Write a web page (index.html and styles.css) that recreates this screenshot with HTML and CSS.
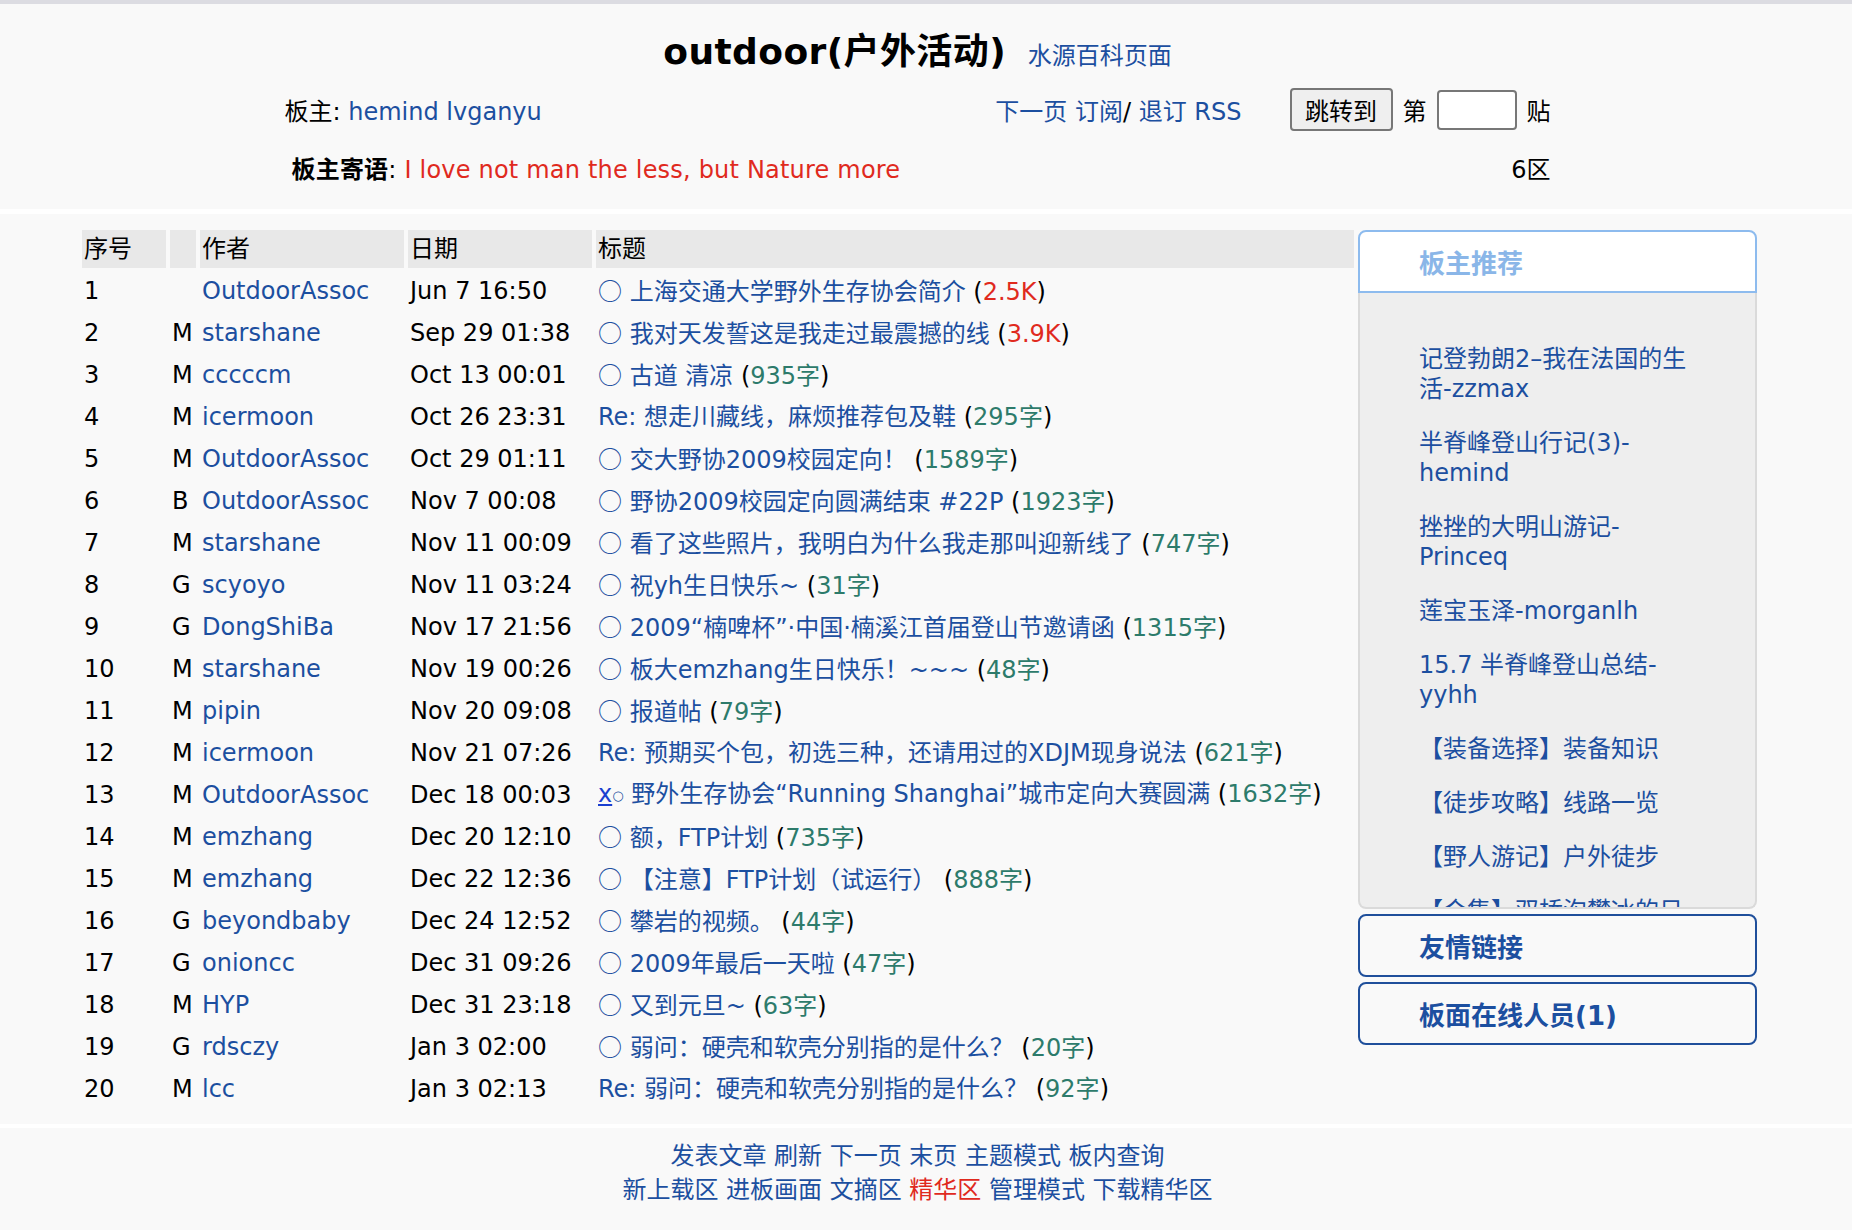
FILE: index.html
```html
<!DOCTYPE html>
<html lang="zh-CN">
<head>
<meta charset="utf-8">
<title>outdoor(户外活动)</title>
<link rel="stylesheet" href="styles.css">
</head>
<body>
<div class="topline"></div>
<header class="header">
  <div class="header-inner">
    <div class="title-row">
      <h1 class="title">outdoor(户外活动)</h1>
      <a class="wiki" href="#">水源百科页面</a>
    </div>
    <div class="info-row">
      <div class="owners">板主: <a href="#">hemind</a> <a href="#">lvganyu</a></div>
      <div class="nav"><a href="#">下一页</a> <a href="#">订阅</a>/ <a href="#">退订</a> <a href="#">RSS</a></div>
      <form class="jump">
        <button type="button" class="jump-btn">跳转到</button>
        <span>第</span>
        <input class="jump-input" type="text">
        <span>贴</span>
      </form>
    </div>
    <div class="motto-row">
      <div class="motto"><b>板主寄语</b>: <span class="red">I love not man the less, but Nature more</span></div>
      <div class="zone">6区</div>
    </div>
  </div>
</header>

<main class="main">
  <table class="posts">
    <thead>
      <tr>
        <th class="c-num">序号</th>
        <th class="c-flag"></th>
        <th class="c-author">作者</th>
        <th class="c-date">日期</th>
        <th class="c-title">标题</th>
      </tr>
    </thead>
    <tbody>
      <tr><td>1</td><td></td><td><a href="#">OutdoorAssoc</a></td><td>Jun 7 16:50</td><td><a href="#"><span class="dot">○</span> 上海交通大学野外生存协会简介</a> (<span class="red">2.5K</span>)</td></tr>
      <tr><td>2</td><td>M</td><td><a href="#">starshane</a></td><td>Sep 29 01:38</td><td><a href="#"><span class="dot">○</span> 我对天发誓这是我走过最震撼的线</a> (<span class="red">3.9K</span>)</td></tr>
      <tr><td>3</td><td>M</td><td><a href="#">cccccm</a></td><td>Oct 13 00:01</td><td><a href="#"><span class="dot">○</span> 古道 清凉</a> (<span class="green">935字</span>)</td></tr>
      <tr><td>4</td><td>M</td><td><a href="#">icermoon</a></td><td>Oct 26 23:31</td><td><a href="#">Re: 想走川藏线，麻烦推荐包及鞋</a> (<span class="green">295字</span>)</td></tr>
      <tr><td>5</td><td>M</td><td><a href="#">OutdoorAssoc</a></td><td>Oct 29 01:11</td><td><a href="#"><span class="dot">○</span> 交大野协2009校园定向！</a> (<span class="green">1589字</span>)</td></tr>
      <tr><td>6</td><td>B</td><td><a href="#">OutdoorAssoc</a></td><td>Nov 7 00:08</td><td><a href="#"><span class="dot">○</span> 野协2009校园定向圆满结束 #22P</a> (<span class="green">1923字</span>)</td></tr>
      <tr><td>7</td><td>M</td><td><a href="#">starshane</a></td><td>Nov 11 00:09</td><td><a href="#"><span class="dot">○</span> 看了这些照片，我明白为什么我走那叫迎新线了</a> (<span class="green">747字</span>)</td></tr>
      <tr><td>8</td><td>G</td><td><a href="#">scyoyo</a></td><td>Nov 11 03:24</td><td><a href="#"><span class="dot">○</span> 祝yh生日快乐~</a> (<span class="green">31字</span>)</td></tr>
      <tr><td>9</td><td>G</td><td><a href="#">DongShiBa</a></td><td>Nov 17 21:56</td><td><a href="#"><span class="dot">○</span> 2009“楠啤杯”·中国·楠溪江首届登山节邀请函</a> (<span class="green">1315字</span>)</td></tr>
      <tr><td>10</td><td>M</td><td><a href="#">starshane</a></td><td>Nov 19 00:26</td><td><a href="#"><span class="dot">○</span> 板大emzhang生日快乐！~~~</a> (<span class="green">48字</span>)</td></tr>
      <tr><td>11</td><td>M</td><td><a href="#">pipin</a></td><td>Nov 20 09:08</td><td><a href="#"><span class="dot">○</span> 报道帖</a> (<span class="green">79字</span>)</td></tr>
      <tr><td>12</td><td>M</td><td><a href="#">icermoon</a></td><td>Nov 21 07:26</td><td><a href="#">Re: 预期买个包，初选三种，还请用过的XDJM现身说法</a> (<span class="green">621字</span>)</td></tr>
      <tr><td>13</td><td>M</td><td><a href="#">OutdoorAssoc</a></td><td>Dec 18 00:03</td><td><a href="#" class="mark">x</a><a href="#"><span class="small-dot">○</span> 野外生存协会“Running Shanghai”城市定向大赛圆满</a> (<span class="green">1632字</span>)</td></tr>
      <tr><td>14</td><td>M</td><td><a href="#">emzhang</a></td><td>Dec 20 12:10</td><td><a href="#"><span class="dot">○</span> 额，FTP计划</a> (<span class="green">735字</span>)</td></tr>
      <tr><td>15</td><td>M</td><td><a href="#">emzhang</a></td><td>Dec 22 12:36</td><td><a href="#"><span class="dot">○</span> 【注意】FTP计划（试运行）</a> (<span class="green">888字</span>)</td></tr>
      <tr><td>16</td><td>G</td><td><a href="#">beyondbaby</a></td><td>Dec 24 12:52</td><td><a href="#"><span class="dot">○</span> 攀岩的视频。</a> (<span class="green">44字</span>)</td></tr>
      <tr><td>17</td><td>G</td><td><a href="#">onioncc</a></td><td>Dec 31 09:26</td><td><a href="#"><span class="dot">○</span> 2009年最后一天啦</a> (<span class="green">47字</span>)</td></tr>
      <tr><td>18</td><td>M</td><td><a href="#">HYP</a></td><td>Dec 31 23:18</td><td><a href="#"><span class="dot">○</span> 又到元旦~</a> (<span class="green">63字</span>)</td></tr>
      <tr><td>19</td><td>G</td><td><a href="#">rdsczy</a></td><td>Jan 3 02:00</td><td><a href="#"><span class="dot">○</span> 弱问：硬壳和软壳分别指的是什么？</a> (<span class="green">20字</span>)</td></tr>
      <tr><td>20</td><td>M</td><td><a href="#">lcc</a></td><td>Jan 3 02:13</td><td><a href="#">Re: 弱问：硬壳和软壳分别指的是什么？</a> (<span class="green">92字</span>)</td></tr>
    </tbody>
  </table>

  <aside class="side">
    <section class="rec">
      <div class="rec-head">板主推荐</div>
      <div class="rec-body">
        <ul class="rec-list">
          <li><a href="#">记登勃朗2–我在法国的生活-zzmax</a></li>
          <li><a href="#">半脊峰登山行记(3)-hemind</a></li>
          <li><a href="#">挫挫的大明山游记-Princeq</a></li>
          <li><a href="#">莲宝玉泽-morganlh</a></li>
          <li><a href="#">15.7 半脊峰登山总结-yyhh</a></li>
          <li><a href="#">【装备选择】装备知识</a></li>
          <li><a href="#">【徒步攻略】线路一览</a></li>
          <li><a href="#">【野人游记】户外徒步</a></li>
          <li><a href="#">【合集】双桥沟攀冰的日子</a></li>
        </ul>
      </div>
    </section>
    <section class="box">友情链接</section>
    <section class="box box-online">板面在线人员(1)</section>
  </aside>
</main>

<footer class="footer">
  <div class="foot-line"><a href="#">发表文章</a> <a href="#">刷新</a> <a href="#">下一页</a> <a href="#">末页</a> <a href="#">主题模式</a> <a href="#">板内查询</a></div>
  <div class="foot-line"><a href="#">新上载区</a> <a href="#">进板画面</a> <a href="#">文摘区</a> <a href="#" class="red">精华区</a> <a href="#">管理模式</a> <a href="#">下载精华区</a></div>
</footer>
</body>
</html>
```

FILE: styles.css
```css
html, body {
  margin: 0;
  padding: 0;
  background: #ffffff;
}

body {
  font-family: "DejaVu Sans", "Noto Sans CJK SC", sans-serif;
  font-size: 24px;
  color: #000;
}

a {
  color: #1c4fa0;
  text-decoration: none;
}

.red { color: #e02a1e; }
a.red { color: #e02a1e; }
.green { color: #2d7b6b; }

.topline {
  height: 4px;
  background: #dcdce2;
}

/* ---------- header ---------- */
.header {
  background: #f9f9f9;
  height: 205px;
  margin-bottom: 5px;
  padding-right: 17px;
}

.header-inner {
  width: 1266px;
  margin: 0 auto;
  padding-top: 27px;
}

.title-row {
  text-align: center;
  line-height: 42px;
  height: 42px;
}

.title {
  display: inline;
  font-size: 36px;
  font-weight: bold;
  margin: 0;
  letter-spacing: 0.4px;
}

.wiki {
  font-size: 24px;
  margin-left: 14px;
}

.info-row {
  display: flex;
  align-items: center;
  height: 43px;
  margin-top: 15px;
}

.owners {
  flex: 1;
}

.nav {
  margin-right: 48px;
}

.jump {
  display: flex;
  align-items: center;
  gap: 10px;
  margin: 0;
}

.jump-btn {
  box-sizing: border-box;
  width: 103px;
  height: 43px;
  border: 2px solid #777;
  border-radius: 4px;
  background: #efefef;
  font-family: "Noto Sans CJK SC", sans-serif;
  font-size: 24px;
  padding: 0;
  color: #000;
}

.jump-input {
  box-sizing: border-box;
  width: 80px;
  height: 40px;
  border: 2px solid #777;
  border-radius: 4px;
  background: #fff;
}

.motto-row {
  display: flex;
  align-items: center;
  height: 30px;
  margin-top: 21px;
}

.motto {
  flex: 1;
  padding-left: 7px;
  letter-spacing: 0.2px;
}

/* ---------- main ---------- */
.main {
  background: #f9f9f9;
  display: flex;
  align-items: flex-start;
  padding: 12px 0 12px 78px;
}

.posts {
  border-collapse: separate;
  border-spacing: 4px;
  table-layout: fixed;
  width: 1280px;
  flex: none;
}

.posts th,
.posts td {
  box-sizing: border-box;
  height: 38px;
  padding: 0 2px;
  line-height: 30px;
  text-align: left;
  vertical-align: middle;
  white-space: nowrap;
}

.posts th {
  background: #e8e8e8;
  font-weight: normal;
}

.c-num { width: 84px; }
.c-flag { width: 26px; }
.c-author { width: 204px; }
.c-date { width: 184px; }
.c-title { width: 758px; }

.dot {
  font-family: "Noto Sans CJK SC", sans-serif;
  font-size: 24px;
}

.mark {
  text-decoration: underline;
  color: #1a3fd0;
}

.small-dot {
  font-size: 13px;
  vertical-align: 2px;
}

/* ---------- sidebar ---------- */
.side {
  width: 399px;
  flex: none;
  margin-top: 4px;
  display: flex;
  flex-direction: column;
  gap: 5px;
}

.rec-head {
  box-sizing: border-box;
  height: 63px;
  border: 2px solid #8dbbee;
  border-radius: 8px 8px 0 0;
  background: #ffffff;
  padding-left: 59px;
  display: flex;
  align-items: center;
  font-size: 26px;
  font-weight: bold;
  color: #8ab6e8;
}

.rec-body {
  box-sizing: border-box;
  height: 616px;
  border: 2px solid #dadada;
  border-top: none;
  border-radius: 0 0 8px 8px;
  background: #eeeeee;
  overflow: hidden;
  padding-top: 51px;
}

.rec-list {
  list-style: none;
  margin: 0;
  padding: 0 0 0 59px;
  width: 280px;
  line-height: 30px;
}

.rec-list li {
  margin-bottom: 24px;
}

.box {
  box-sizing: border-box;
  height: 63px;
  border: 2px solid #1f4f9b;
  border-radius: 8px;
  padding-left: 59px;
  display: flex;
  align-items: center;
  font-size: 26px;
  font-weight: bold;
  color: #1c4fa0;
}

/* ---------- footer ---------- */
.footer {
  margin-top: 4px;
  background: #f9f9f9;
  min-height: 102px;
  box-sizing: border-box;
  padding: 11px 17px 0 0;
  text-align: center;
  line-height: 34px;
}
```
